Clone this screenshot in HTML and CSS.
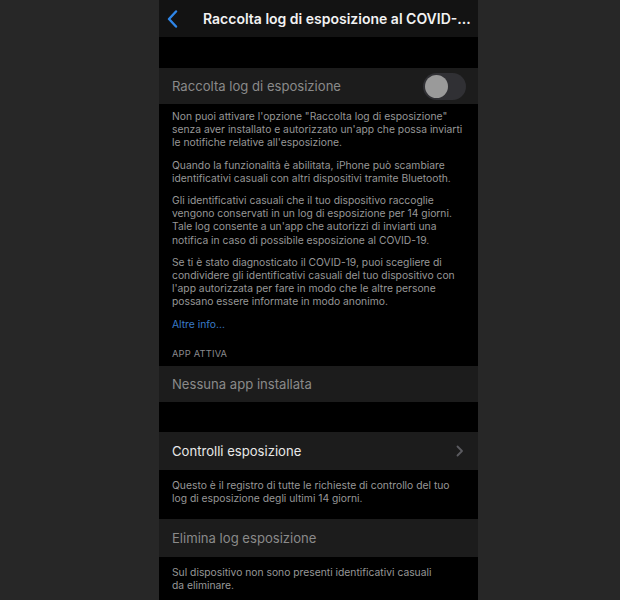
FILE: index.html
```html
<!DOCTYPE html>
<html lang="it">
<head>
    <meta charset="UTF-8">
    <meta name="viewport" content="width=device-width, initial-scale=1.0">
    <title>Raccolta log di esposizione</title>
    <link rel="stylesheet" href="styles.css">
</head>
<body>
    <div class="phone">
        <header class="nav">
            <svg class="back" width="11" height="18" viewBox="0 0 11 18">
                <path d="M9 1.5 L2 9 L9 16.5" fill="none" stroke="#2f86e8" stroke-width="2.4" stroke-linecap="round" stroke-linejoin="round"/>
            </svg>
            <h1 class="nav-title">Raccolta log di esposizione al COVID-...</h1>
        </header>

        <div class="gap"></div>

        <div class="cell">
            <span class="cell-label disabled">Raccolta log di esposizione</span>
            <div class="toggle">
                <div class="knob"></div>
            </div>
        </div>

        <div class="footer first">
            <p>Non puoi attivare l'opzione "Raccolta log di esposizione"<br>senza aver installato e autorizzato un'app che possa inviarti<br>le notifiche relative all'esposizione.</p>
            <p>Quando la funzionalità è abilitata, iPhone può scambiare<br>identificativi casuali con altri dispositivi tramite Bluetooth.</p>
            <p>Gli identificativi casuali che il tuo dispositivo raccoglie<br>vengono conservati in un log di esposizione per 14 giorni.<br>Tale log consente a un'app che autorizzi di inviarti una<br>notifica in caso di possibile esposizione al COVID-19.</p>
            <p>Se ti è stato diagnosticato il COVID-19, puoi scegliere di<br>condividere gli identificativi casuali del tuo dispositivo con<br>l'app autorizzata per fare in modo che le altre persone<br>possano essere informate in modo anonimo.</p>
            <a href="#" class="more">Altre info...</a>
        </div>

        <div class="section-header">APP ATTIVA</div>

        <div class="cell">
            <span class="cell-label disabled">Nessuna app installata</span>
        </div>

        <div class="gap narrow"></div>

        <div class="cell tall">
            <span class="cell-label">Controlli esposizione</span>
            <svg class="chevron" width="8" height="12" viewBox="0 0 8 12">
                <path d="M1.5 1.5 L6 6 L1.5 10.5" fill="none" stroke="#5b5b60" stroke-width="1.8" stroke-linecap="round" stroke-linejoin="round"/>
            </svg>
        </div>

        <div class="footer short">
            <p>Questo è il registro di tutte le richieste di controllo del tuo<br>log di esposizione degli ultimi 14 giorni.</p>
        </div>

        <div class="cell tall">
            <span class="cell-label disabled">Elimina log esposizione</span>
        </div>

        <div class="footer short">
            <p>Sul dispositivo non sono presenti identificativi casuali<br>da eliminare.</p>
        </div>
    </div>
</body>
</html>
```

FILE: styles.css
```css
* {
    margin: 0;
    padding: 0;
    box-sizing: border-box;
}

body {
    background: #272727;
    font-family: Inter, "Noto Sans", sans-serif;
    height: 600px;
    overflow: hidden;
}

.phone {
    width: 319px;
    margin-left: 159px;
    min-height: 600px;
    background: #000;
}

.nav {
    height: 37px;
    background: #131313;
    display: flex;
    align-items: center;
    padding-left: 8px;
    gap: 25px;
}

.back {
    flex-shrink: 0;
}

.nav-title {
    color: #f2f2f2;
    font-size: 14px;
    font-weight: 600;
    white-space: nowrap;
}

.gap {
    height: 31px;
    background: #000;
}

.gap.narrow {
    height: 30px;
}

.cell {
    height: 36px;
    background: #1c1c1c;
    display: flex;
    align-items: center;
    justify-content: space-between;
    padding: 0 12px 0 13px;
}

.cell.tall {
    height: 38px;
}

.cell-label {
    color: #e8e8e8;
    font-size: 13.1px;
}

.cell-label.disabled {
    color: #8a8a8a;
}

.toggle {
    width: 43px;
    height: 27px;
    border-radius: 14px;
    background: #303034;
    padding: 2px;
}

.knob {
    width: 23px;
    height: 23px;
    border-radius: 50%;
    background: #9a9a9a;
}

.chevron {
    margin-right: 2px;
}

.footer {
    padding: 6px 13px 0;
    color: #979797;
    font-size: 10.3px;
    line-height: 13.2px;
    white-space: nowrap;
}

.footer p {
    margin-bottom: 9px;
}

.footer.short {
    height: 49px;
    padding-top: 9px;
}

.more {
    display: block;
    color: #3a7bc8;
    text-decoration: none;
}

.section-header {
    padding: 17px 13px 7px;
    color: #8a8a8e;
    font-size: 9.3px;
    letter-spacing: 0.2px;
}
```
